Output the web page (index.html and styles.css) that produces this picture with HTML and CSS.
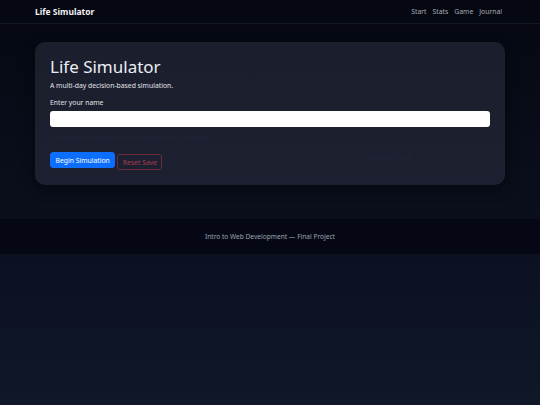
FILE: index.html
```html
<!DOCTYPE html>
<html lang="en">
<head>
<meta charset="utf-8">
<title>Life Simulator</title>
<link rel="stylesheet" href="styles.css">
</head>
<body>
<nav class="navbar">
  <div class="nav-inner">
    <span class="brand">Life Simulator</span>
    <ul class="nav-links">
      <li><a href="#">Start</a></li>
      <li><a href="#">Stats</a></li>
      <li><a href="#">Game</a></li>
      <li><a href="#">Journal</a></li>
    </ul>
  </div>
</nav>
<main class="main">
  <section class="card">
    <h1 class="title">Life Simulator</h1>
    <p class="lead">A multi-day decision-based simulation.</p>
    <label class="label" for="name">Enter your name</label>
    <input class="input" id="name" type="text">
    <p class="hint">Your progress is saved automatically in this browser.</p>
    <div class="actions">
      <button class="btn btn-primary">Begin Simulation</button>
      <button class="btn btn-outline">Reset Save</button>
      <span class="status">No save found</span>
    </div>
  </section>
</main>
<footer class="footer">Intro to Web Development — Final Project</footer>
</body>
</html>
```
FILE: styles.css
```css
* { box-sizing: border-box; }
html {
  min-height: 100%;
  background: linear-gradient(180deg, #050711 0%, #0a0f1d 50%, #0f1729 100%);
}
body {
  margin: 0;
  font-family: "Noto Sans", "Open Sans", sans-serif;
  color: #e6e8ee;
  font-size: 6.8px;
}
.navbar {
  height: 24px;
  background: #050711;
  border-bottom: 1px solid #141826;
}
.nav-inner {
  height: 100%;
  margin: 0 35px;
  display: flex;
  align-items: center;
  justify-content: space-between;
}
.brand {
  font-weight: 700;
  font-size: 8.5px;
  color: #f2f3f6;
}
.nav-links {
  list-style: none;
  margin: 0;
  padding: 0;
  display: flex;
  gap: 6px;
  padding-right: 3px;
}
.nav-links a {
  color: #a9adbb;
  text-decoration: none;
  font-size: 6.8px;
}
.main {
  padding: 18px 35px 34px;
  background: linear-gradient(180deg, #060913 0%, #0b0f1c 100%);
}
.card {
  background: linear-gradient(180deg, #1b1e2c 0%, #1c2030 100%);
  border-radius: 10px;
  padding: 13px 15px 15px;
  box-shadow: 0 4px 14px rgba(0, 0, 0, 0.45);
}
.title {
  margin: 0;
  font-weight: 400;
  font-size: 17px;
  line-height: 24px;
  color: #eceef3;
}
.lead {
  margin: 2px 0 0;
  line-height: 10px;
  color: #e2e4ea;
}
.label {
  display: block;
  margin-top: 7px;
  line-height: 10px;
  color: #e2e4ea;
}
.input {
  display: block;
  width: 100%;
  height: 16px;
  margin-top: 3px;
  border: 0;
  border-radius: 3px;
  background: #ffffff;
}
.hint {
  margin: 6px 0 0;
  line-height: 10px;
  font-size: 6.5px;
  color: #20253a;
}
.actions {
  margin-top: 9px;
  display: flex;
  align-items: flex-start;
  gap: 2px;
}
.btn {
  font-family: inherit;
  font-size: 6.8px;
  height: 16px;
  padding: 0 4.5px;
  border-radius: 3px;
  cursor: pointer;
}
.btn-primary {
  background: #0d6efd;
  border: 1px solid #0d6efd;
  color: #ffffff;
}
.btn-outline {
  margin-top: 2px;
  background: transparent;
  border: 1px solid #6b2a38;
  color: #a8404f;
}
.status {
  margin-left: 203px;
  margin-top: 1px;
  color: #21263a;
  font-size: 6.5px;
}
.footer {
  height: 35px;
  display: flex;
  align-items: center;
  justify-content: center;
  background: #050814;
  color: #9ea3b3;
  font-size: 6.6px;
}
```
